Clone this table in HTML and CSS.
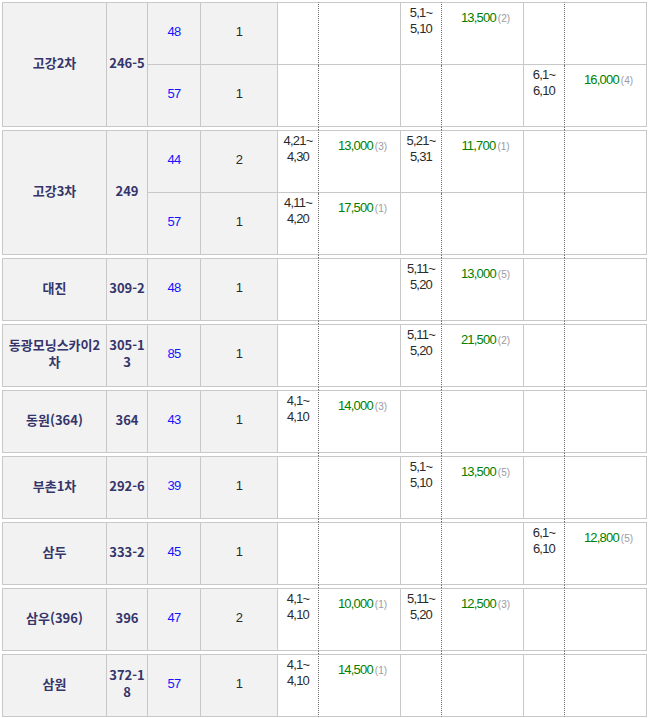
FILE: index.html
```html
<!DOCTYPE html>
<html lang="ko">
<head>
<meta charset="utf-8">
<title>분양 일정</title>
<link rel="stylesheet" href="styles.css">
</head>
<body>
<table class="list">
  <colgroup>
    <col class="c-name"><col class="c-lot"><col class="c-area"><col class="c-cnt">
    <col class="c-date"><col class="c-price"><col class="c-date"><col class="c-price"><col class="c-date"><col class="c-price">
  </colgroup>
  <tbody>
    <!-- 고강2차 -->
    <tr class="first">
      <td class="g name" rowspan="2">고강2차</td>
      <td class="g lot" rowspan="2">246-5</td>
      <td class="g area">48</td>
      <td class="g cnt">1</td>
      <td class="d date"></td><td class="price"></td>
      <td class="d date">5,1~<br>5,10</td><td class="price">13,500<small>(2)</small></td>
      <td class="d date"></td><td class="price"></td>
    </tr>
    <tr>
      <td class="g area">57</td>
      <td class="g cnt">1</td>
      <td class="d date"></td><td class="price"></td>
      <td class="d date"></td><td class="price"></td>
      <td class="d date">6,1~<br>6,10</td><td class="price">16,000<small>(4)</small></td>
    </tr>
    <tr class="sp"><td colspan="4"></td><td class="d"></td><td></td><td class="d"></td><td></td><td class="d"></td><td></td></tr>

    <!-- 고강3차 -->
    <tr class="first">
      <td class="g name" rowspan="2">고강3차</td>
      <td class="g lot" rowspan="2">249</td>
      <td class="g area">44</td>
      <td class="g cnt">2</td>
      <td class="d date">4,21~<br>4,30</td><td class="price">13,000<small>(3)</small></td>
      <td class="d date">5,21~<br>5,31</td><td class="price">11,700<small>(1)</small></td>
      <td class="d date"></td><td class="price"></td>
    </tr>
    <tr>
      <td class="g area">57</td>
      <td class="g cnt">1</td>
      <td class="d date">4,11~<br>4,20</td><td class="price">17,500<small>(1)</small></td>
      <td class="d date"></td><td class="price"></td>
      <td class="d date"></td><td class="price"></td>
    </tr>
    <tr class="sp"><td colspan="4"></td><td class="d"></td><td></td><td class="d"></td><td></td><td class="d"></td><td></td></tr>

    <!-- 대진 -->
    <tr class="first">
      <td class="g name">대진</td>
      <td class="g lot">309-2</td>
      <td class="g area">48</td>
      <td class="g cnt">1</td>
      <td class="d date"></td><td class="price"></td>
      <td class="d date">5,11~<br>5,20</td><td class="price">13,000<small>(5)</small></td>
      <td class="d date"></td><td class="price"></td>
    </tr>
    <tr class="sp"><td colspan="4"></td><td class="d"></td><td></td><td class="d"></td><td></td><td class="d"></td><td></td></tr>

    <!-- 동광모닝스카이2차 -->
    <tr class="first">
      <td class="g name">동광모닝스카이2차</td>
      <td class="g lot">305-13</td>
      <td class="g area">85</td>
      <td class="g cnt">1</td>
      <td class="d date"></td><td class="price"></td>
      <td class="d date">5,11~<br>5,20</td><td class="price">21,500<small>(2)</small></td>
      <td class="d date"></td><td class="price"></td>
    </tr>
    <tr class="sp"><td colspan="4"></td><td class="d"></td><td></td><td class="d"></td><td></td><td class="d"></td><td></td></tr>

    <!-- 동원(364) -->
    <tr class="first">
      <td class="g name">동원(364)</td>
      <td class="g lot">364</td>
      <td class="g area">43</td>
      <td class="g cnt">1</td>
      <td class="d date">4,1~<br>4,10</td><td class="price">14,000<small>(3)</small></td>
      <td class="d date"></td><td class="price"></td>
      <td class="d date"></td><td class="price"></td>
    </tr>
    <tr class="sp"><td colspan="4"></td><td class="d"></td><td></td><td class="d"></td><td></td><td class="d"></td><td></td></tr>

    <!-- 부촌1차 -->
    <tr class="first">
      <td class="g name">부촌1차</td>
      <td class="g lot">292-6</td>
      <td class="g area">39</td>
      <td class="g cnt">1</td>
      <td class="d date"></td><td class="price"></td>
      <td class="d date">5,1~<br>5,10</td><td class="price">13,500<small>(5)</small></td>
      <td class="d date"></td><td class="price"></td>
    </tr>
    <tr class="sp"><td colspan="4"></td><td class="d"></td><td></td><td class="d"></td><td></td><td class="d"></td><td></td></tr>

    <!-- 삼두 -->
    <tr class="first">
      <td class="g name">삼두</td>
      <td class="g lot">333-2</td>
      <td class="g area">45</td>
      <td class="g cnt">1</td>
      <td class="d date"></td><td class="price"></td>
      <td class="d date"></td><td class="price"></td>
      <td class="d date">6,1~<br>6,10</td><td class="price">12,800<small>(5)</small></td>
    </tr>
    <tr class="sp"><td colspan="4"></td><td class="d"></td><td></td><td class="d"></td><td></td><td class="d"></td><td></td></tr>

    <!-- 삼우(396) -->
    <tr class="first">
      <td class="g name">삼우(396)</td>
      <td class="g lot">396</td>
      <td class="g area">47</td>
      <td class="g cnt">2</td>
      <td class="d date">4,1~<br>4,10</td><td class="price">10,000<small>(1)</small></td>
      <td class="d date">5,11~<br>5,20</td><td class="price">12,500<small>(3)</small></td>
      <td class="d date"></td><td class="price"></td>
    </tr>
    <tr class="sp"><td colspan="4"></td><td class="d"></td><td></td><td class="d"></td><td></td><td class="d"></td><td></td></tr>

    <!-- 삼원 -->
    <tr class="first">
      <td class="g name">삼원</td>
      <td class="g lot">372-18</td>
      <td class="g area">57</td>
      <td class="g cnt">1</td>
      <td class="d date">4,1~<br>4,10</td><td class="price">14,500<small>(1)</small></td>
      <td class="d date"></td><td class="price"></td>
      <td class="d date"></td><td class="price"></td>
    </tr>
  </tbody>
</table>
</body>
</html>
```

FILE: styles.css
```css
html, body {
  background: #ffffff;
}

body {
  margin: 0;
  padding: 2px 0 0 2px;
  font-family: "Liberation Sans", "Noto Sans CJK KR", sans-serif;
  font-size: 13px;
  color: #333333;
}

.list {
  border-collapse: separate;
  border-spacing: 0;
  table-layout: fixed;
  width: 645px;
}

.c-name { width: 105px; }
.c-lot { width: 41px; }
.c-area { width: 53px; }
.c-cnt { width: 77px; }
.c-date { width: 41px; }
.c-price { width: 82px; }

.list td {
  box-sizing: border-box;
  height: 62px;
  padding: 0;
  border-right: 1px solid #c8c8c8;
  border-bottom: 1px solid #c8c8c8;
  text-align: center;
  vertical-align: top;
  line-height: 16px;
  letter-spacing: -0.8px;
  background: #ffffff;
}

.list tr.first td {
  height: 63px;
  border-top: 1px solid #c8c8c8;
}

.list td.d {
  border-right: 1px dotted #6e6e6e;
}

.list td.g {
  padding-bottom: 3px;
  background: #f2f2f2;
  vertical-align: middle;
}

.list td.name,
.list td.lot {
  font-family: "Noto Sans CJK KR", sans-serif;
  font-size: 13px;
  font-weight: bold;
  color: #35356a;
  line-height: 17px;
  letter-spacing: 0;
  word-break: break-all;
}

.list td.name {
  border-left: 1px solid #c8c8c8;
  padding: 0 1px 5px;
}

.list td.lot {
  padding: 0 1px 5px;
}

.list td.area {
  color: #1515ff;
}

.list td.cnt {
  color: #2a2a2a;
}

.list td.date {
  padding-top: 2px;
  color: #2a2a2a;
}

.list td.price {
  padding: 7px 0 0 6px;
  color: #008000;
}

.price small {
  margin-left: 2px;
  font-size: 10px;
  letter-spacing: 0;
  color: #9a9aa4;
}

.list tr.sp td {
  height: 3px;
  padding: 0;
  border: 0;
  background: transparent;
}

.list tr.sp td.d {
  border-right: 1px dotted #6e6e6e;
}
```
